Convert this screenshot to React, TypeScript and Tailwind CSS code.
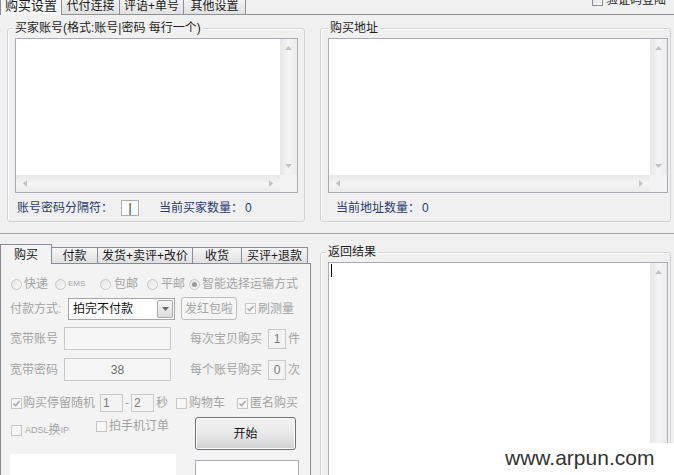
import React from "react";

type Dir = "up" | "down" | "left" | "right";

function Arrow({ dir, color = "#c2c2c2" }: { dir: Dir; color?: string }) {
  const vertical = dir === "up" || dir === "down";
  const pts = {
    up: "0,4 3.5,0 7,4",
    down: "0,0 7,0 3.5,4",
    left: "4,0 4,7 0,3.5",
    right: "0,0 0,7 4,3.5",
  }[dir];
  return (
    <svg width={vertical ? 7 : 4} height={vertical ? 4 : 7} viewBox={vertical ? "0 0 7 4" : "0 0 4 7"}>
      <polygon points={pts} fill={color} />
    </svg>
  );
}

function VBar() {
  return (
    <div className="flex w-[17px] shrink-0 flex-col items-center justify-between bg-gradient-to-r from-[#e7e7e7] via-[#f4f4f4] to-[#ebebeb] py-[7px]">
      <Arrow dir="up" />
      <Arrow dir="down" />
    </div>
  );
}

function HBar() {
  return (
    <div className="flex flex-1 items-center justify-between bg-gradient-to-b from-[#e7e7e7] via-[#f4f4f4] to-[#ebebeb] px-[7px]">
      <Arrow dir="left" />
      <Arrow dir="right" />
    </div>
  );
}

function TextBox({
  className,
  hbar,
  children,
}: {
  className: string;
  hbar?: boolean;
  children?: React.ReactNode;
}) {
  return (
    <div className={"flex shrink-0 flex-col border border-[#a9acb2] bg-white " + className}>
      <div className="flex min-h-0 flex-1">
        <div className="flex-1 pl-[1px] pt-[1px]">{children}</div>
        <VBar />
      </div>
      {hbar && (
        <div className="flex h-[17px] shrink-0">
          <HBar />
          <div className="w-[17px] bg-[#f3f3f3]" />
        </div>
      )}
    </div>
  );
}

function GroupBox({
  title,
  className,
  titleClass,
  boxClass,
  children,
}: {
  title: string;
  className: string;
  titleClass: string;
  boxClass: string;
  children?: React.ReactNode;
}) {
  return (
    <div className={"flex shrink-0 flex-col " + className}>
      <span className={"relative z-10 self-start bg-[#f0f0f0] px-[2px] leading-[12px] text-[#1e1e1e] " + titleClass}>
        {title}
      </span>
      <div className={"-mt-[6px] rounded-[3px] border border-[#d0d5d9] shadow-[inset_1px_1px_0_#ffffff] " + boxClass}>
        {children}
      </div>
    </div>
  );
}

function Radio({ checked }: { checked?: boolean }) {
  return (
    <span className="flex h-[11px] w-[11px] shrink-0 items-center justify-center rounded-full border border-[#c6c6c6] bg-gradient-to-br from-[#e4e4e4] to-[#fafafa]">
      {checked && <span className="h-[5px] w-[5px] rounded-full bg-[#9a9a9a]" />}
    </span>
  );
}

function Check({ checked }: { checked?: boolean }) {
  return (
    <span className="flex h-[11px] w-[11px] shrink-0 items-center justify-center border border-[#c6c6c6] bg-[#f6f6f6]">
      {checked && (
        <svg width="9" height="9" viewBox="0 0 9 9">
          <path d="M1.5 4.5 L3.6 6.6 L7.6 2" stroke="#a8a8a8" strokeWidth="1.5" fill="none" />
        </svg>
      )}
    </span>
  );
}

export default function App() {
  return (
    <div className="relative flex h-[475px] w-[674px] flex-col overflow-hidden bg-[#f0f0f0] font-['Liberation_Sans','Noto_Sans_CJK_SC',sans-serif] text-[12px] leading-[14px] text-[#1a1a1a]">
      {/* main tabs */}
      <div className="flex h-[14px] shrink-0 items-end">
        <div className="relative z-10 -mb-px flex h-[20px] w-[62px] shrink-0 items-center justify-center border-x border-t border-[#8c8e94] bg-[#f7f7f7] text-[13px]">
          购买设置
        </div>
        <div className="flex h-[17px] w-[58px] shrink-0 items-center justify-center border-r border-t border-[#8c8e94] bg-gradient-to-b from-[#f5f5f5] to-[#e1e1e1]">
          代付连接
        </div>
        <div className="flex h-[17px] w-[64px] shrink-0 items-center justify-center border-r border-t border-[#8c8e94] bg-gradient-to-b from-[#f5f5f5] to-[#e1e1e1]">
          评语+单号
        </div>
        <div className="flex h-[17px] w-[62px] shrink-0 items-center justify-center border-r border-t border-[#8c8e94] bg-gradient-to-b from-[#f5f5f5] to-[#e1e1e1]">
          其他设置
        </div>
        <label className="mb-[8px] ml-auto mr-[8px] flex h-[12px] items-center gap-[3px]">
          <span className="h-[11px] w-[11px] border border-[#8f8f8f] bg-gradient-to-br from-[#dcdcdc] to-[#fbfbfb]" />
          验证码登陆
        </label>
      </div>

      {/* account / address page */}
      <div className="flex h-[220px] shrink-0 gap-[15px] border-y border-b-[#a3a3a3] border-t-[#8f9194] pl-[7px] pt-[7px]">
        <GroupBox
          title="买家账号(格式:账号|密码 每行一个)"
          className="w-[298px]"
          titleClass="ml-[6px]"
          boxClass="h-[194px] pl-[7px] pt-[9px]"
        >
          <TextBox hbar className="h-[155px] w-[283px]" />
          <div className="mt-[7px] flex h-[16px] items-center text-[#2a3b6e]">
            <span className="ml-[2px]">账号密码分隔符：</span>
            <span className="ml-[8px] flex h-[16px] w-[18px] items-center justify-center border border-[#a9acb2] bg-white text-[#222]">
              |
            </span>
            <span className="ml-[20px]">当前买家数量：</span>
            <span className="ml-[2px]">0</span>
          </div>
        </GroupBox>
        <GroupBox title="购买地址" className="w-[351px]" titleClass="ml-[8px]" boxClass="h-[194px] pl-[7px] pt-[9px]">
          <TextBox hbar className="h-[155px] w-[340px]" />
          <div className="mt-[7px] flex h-[16px] items-center text-[#2a3b6e]">
            <span className="ml-[8px]">当前地址数量：</span>
            <span className="ml-[2px]">0</span>
          </div>
        </GroupBox>
      </div>

      <div className="flex min-h-0 flex-1">
        {/* order actions */}
        <div className="flex w-[311px] shrink-0 flex-col pt-[10px]">
          <div className="flex h-[19px] shrink-0 items-end">
            <div className="relative z-10 -mb-px flex h-[20px] w-[52px] shrink-0 items-center justify-center border-x border-t border-[#898c95] bg-[#f3f3f3]">
              购买
            </div>
            <div className="flex h-[16px] w-[46px] shrink-0 items-center justify-center border-r border-t border-[#898c95] bg-gradient-to-b from-[#f6f6f6] to-[#e0e0e0]">
              付款
            </div>
            <div className="flex h-[16px] w-[95px] shrink-0 items-center justify-center border-r border-t border-[#898c95] bg-gradient-to-b from-[#f6f6f6] to-[#e0e0e0]">
              发货+卖评+改价
            </div>
            <div className="flex h-[16px] w-[49px] shrink-0 items-center justify-center border-r border-t border-[#898c95] bg-gradient-to-b from-[#f6f6f6] to-[#e0e0e0]">
              收货
            </div>
            <div className="flex h-[16px] w-[66px] shrink-0 items-center justify-center border-r border-t border-[#898c95] bg-gradient-to-b from-[#f6f6f6] to-[#e0e0e0]">
              买评+退款
            </div>
          </div>

          <div className="flex h-[240px] shrink-0 flex-col border border-[#898c95] bg-[#f3f3f3] pl-[9px] text-[#a3a3a3]">
            {/* shipping method */}
            <div className="mt-[12px] flex h-[16px] items-center">
              <label className="ml-[1px] flex w-[44px] items-center gap-[2px]">
                <Radio />
                快递
              </label>
              <label className="flex w-[45px] items-center gap-[2px]">
                <Radio />
                <span className="text-[8px]">EMS</span>
              </label>
              <label className="flex w-[47px] items-center gap-[3px]">
                <Radio />
                包邮
              </label>
              <label className="flex w-[42px] items-center gap-[3px]">
                <Radio />
                平邮
              </label>
              <label className="flex items-center gap-[2px]">
                <Radio checked />
                智能选择运输方式
              </label>
            </div>

            {/* payment */}
            <div className="mt-[5px] flex h-[23px] items-center">
              <span className="w-[58px]">付款方式:</span>
              <div className="flex h-[22px] w-[107px] items-center justify-between border border-[#a5a5a5] bg-white pl-[4px] pr-[1px] text-[#111]">
                拍完不付款
                <span className="flex h-[18px] w-[16px] items-center justify-center rounded-[2px] border border-[#a8a8a8] bg-gradient-to-b from-[#f6f6f6] to-[#dcdcdc]">
                  <Arrow dir="down" color="#6a6a6a" />
                </span>
              </div>
              <span className="ml-[6px] flex h-[23px] w-[56px] items-center justify-center rounded-[3px] border border-[#bdbdbd] bg-[#f5f5f5]">
                发红包啦
              </span>
              <label className="ml-[8px] flex items-center gap-[2px]">
                <Check checked />
                刷测量
              </label>
            </div>

            {/* broadband account */}
            <div className="mt-[7px] flex h-[23px] items-center">
              <span className="w-[54px]">宽带账号</span>
              <span className="h-[23px] w-[107px] border border-[#c9c9c9] bg-[#f5f5f5]" />
              <span className="ml-[19px]">每次宝贝购买</span>
              <span className="ml-[6px] flex h-[20px] w-[18px] items-center justify-center border border-[#c9c9c9] text-[#7a7a7a]">
                1
              </span>
              <span className="ml-[2px]">件</span>
            </div>

            <div className="mt-[8px] flex h-[23px] items-center">
              <span className="w-[54px]">宽带密码</span>
              <span className="flex h-[23px] w-[107px] items-center justify-center border border-[#c9c9c9] bg-[#f5f5f5] text-[#6d6d6d]">
                38
              </span>
              <span className="ml-[19px]">每个账号购买</span>
              <span className="ml-[6px] flex h-[20px] w-[18px] items-center justify-center border border-[#c9c9c9] text-[#7a7a7a]">
                0
              </span>
              <span className="ml-[2px]">次</span>
            </div>

            {/* delay and options */}
            <div className="mt-[13px] flex h-[18px] items-center">
              <label className="ml-[1px] flex items-center gap-[1px]">
                <Check checked />
                购买停留随机
              </label>
              <span className="ml-[5px] flex h-[18px] w-[23px] items-center border border-[#c9c9c9] pl-[2px] text-[#7a7a7a]">
                1
              </span>
              <span className="mx-[2px]">-</span>
              <span className="flex h-[18px] w-[23px] items-center border border-[#c9c9c9] pl-[2px] text-[#7a7a7a]">
                2
              </span>
              <span className="ml-[2px]">秒</span>
              <label className="ml-[8px] flex items-center gap-[2px]">
                <Check />
                购物车
              </label>
              <label className="ml-[12px] flex items-center gap-[2px]">
                <Check checked />
                匿名购买
              </label>
            </div>

            <div className="mt-[5px] flex h-[33px] items-start">
              <label className="ml-[1px] mt-[6px] flex w-[85px] items-center gap-[3px]">
                <Check />
                <span className="text-[9px]">ADSL</span>
                <span className="-ml-[3px]">换</span>
                <span className="-ml-[3px] text-[9px]">IP</span>
              </label>
              <label className="mt-[2px] flex w-[99px] items-center gap-[2px]">
                <Check />
                拍手机订单
              </label>
              <button className="flex h-[33px] w-[101px] items-center justify-center rounded-[3px] border border-[#707070] bg-gradient-to-b from-[#f3f3f3] via-[#e9e9e9] to-[#d2d2d2] text-[#111] shadow-[inset_0_0_0_1px_#fcfcfc]">
                开始
              </button>
            </div>

            <div className="mt-[4px] flex items-start">
              <span className="h-[40px] w-[166px] bg-white" />
              <span className="ml-[19px] mt-[6px] h-[40px] w-[104px] border border-[#a9acb2] bg-white" />
            </div>
          </div>
        </div>

        {/* results log */}
        <div className="ml-[9px] pt-[12px]">
          <GroupBox title="返回结果" className="w-[351px]" titleClass="ml-[6px]" boxClass="h-[240px] pl-[7px] pt-[9px]">
            <TextBox className="h-[230px] w-[340px]">
              <span className="ml-[1px] block h-[13px] w-px bg-black" />
            </TextBox>
          </GroupBox>
        </div>
      </div>

      <div className="absolute bottom-0 right-0 flex h-[32px] w-[177px] items-center bg-white pb-[3px] pl-[8px] font-['Liberation_Sans',sans-serif] text-[21px] text-[#333]">
        www.arpun.com
      </div>
    </div>
  );
}
